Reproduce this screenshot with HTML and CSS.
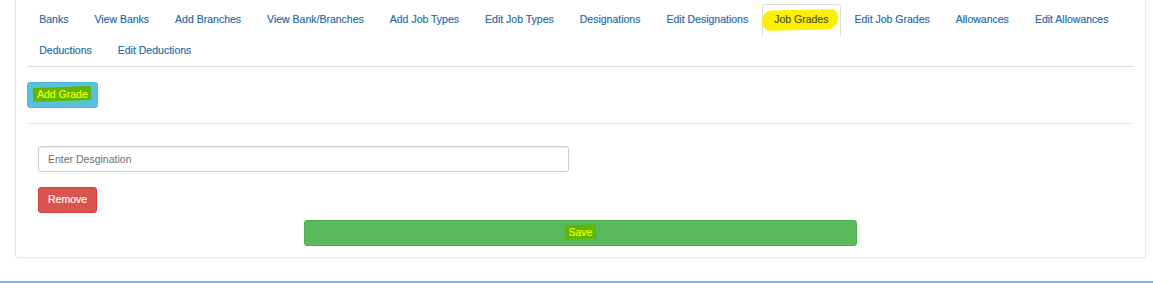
FILE: index.html
```html
<!DOCTYPE html>
<html lang="en">
<head>
    <meta charset="UTF-8">
    <title>Job Grades</title>
    <link rel="stylesheet" href="styles.css">
</head>
<body>
    <div class="page">
        <div class="panel">
            <ul class="nav-tabs">
                <li><a href="#">Banks</a></li>
                <li><a href="#">View Banks</a></li>
                <li><a href="#">Add Branches</a></li>
                <li><a href="#">View Bank/Branches</a></li>
                <li><a href="#">Add Job Types</a></li>
                <li><a href="#">Edit Job Types</a></li>
                <li><a href="#">Designations</a></li>
                <li><a href="#">Edit Designations</a></li>
                <li class="active"><a href="#"><span class="mark-yellow">Job Grades</span></a></li>
                <li><a href="#">Edit Job Grades</a></li>
                <li><a href="#">Allowances</a></li>
                <li><a href="#">Edit Allowances</a></li>
                <li><a href="#">Deductions</a></li>
                <li><a href="#">Edit Deductions</a></li>
            </ul>

            <div class="toolbar">
                <button class="btn btn-info"><span class="mark-green">Add Grade</span></button>
            </div>
            <hr>

            <div class="grade-form">
                <input type="text" class="form-control" placeholder="Enter Desgination">
                <button class="btn btn-danger remove-btn">Remove</button>
            </div>
            <button class="btn btn-success save-btn"><span class="mark-green">Save</span></button>
        </div>
    </div>
    <div class="footer-line"></div>
</body>
</html>
```

FILE: styles.css
```css
* {
    box-sizing: border-box;
}
body {
    margin: 0;
    font-family: 'Liberation Sans', Arial, sans-serif;
    font-size: 10.5px;
    line-height: 15px;
    color: #333;
    background: #fff;
    overflow: hidden;
}
.page {
    padding-left: 15px;
}
.panel {
    width: 1131px;
    margin-top: -8px;
    padding: 11px;
    border: 1px solid #f2e8d2;
    border-radius: 3px;
    box-shadow: 0 1px 1px rgba(0, 0, 0, .04);
    background: #fff;
}
.nav-tabs {
    list-style: none;
    margin: 0;
    padding: 0;
    display: flex;
    flex-wrap: wrap;
    border-bottom: 1px solid #ddd;
}
.nav-tabs li {
    margin-bottom: -1px;
}
.nav-tabs a {
    display: block;
    position: relative;
    padding: 7px 11.25px 8px;
    margin-right: 1.5px;
    line-height: 15px;
    border: 1px solid transparent;
    border-radius: 3px 3px 0 0;
    color: #2167a8;
    text-decoration: none;
    -webkit-text-stroke: 0.15px currentColor;
}
.nav-tabs .active a {
    color: #4a4a1a;
    background: #fff;
    border-color: #ddd #ddd transparent;
}
.mark-yellow {
    position: relative;
    z-index: 1;
}
.mark-yellow::before {
    content: '';
    position: absolute;
    z-index: -1;
    left: -12px;
    right: -10px;
    top: -3px;
    bottom: -5px;
    background: #fbf000;
    border-radius: 10px 6px 12px 8px / 10px 8px 10px 8px;
    transform: rotate(-1.2deg);
}
.mark-green {
    position: relative;
    z-index: 1;
    color: #f4ff00;
}
.mark-green::before {
    content: '';
    position: absolute;
    z-index: -1;
    left: -4px;
    right: -3px;
    top: -1px;
    bottom: -1px;
    background: #5fb800;
    transform: rotate(-2deg);
}
.toolbar {
    margin-top: 15px;
}
.btn {
    display: inline-block;
    padding: 4px 9px 5px;
    font-family: inherit;
    font-size: 10.5px;
    line-height: 15px;
    border: 1px solid transparent;
    border-radius: 3px;
    color: #fff;
    cursor: pointer;
    -webkit-text-stroke: 0.15px currentColor;
}
.btn-info {
    background: #5bc0de;
    border-color: #46b8da;
}
.btn-danger {
    background: #d9534f;
    border-color: #d43f3a;
}
.btn-success {
    background: #5cb85c;
    border-color: #4cae4c;
}
hr {
    margin: 15px 0 0;
    border: 0;
    border-top: 1px solid #e6e6e6;
}
.grade-form {
    padding: 22px 0 0 11px;
}
.form-control {
    display: block;
    width: 531px;
    height: 26px;
    padding: 4.5px 9px;
    font-family: inherit;
    font-size: 10.5px;
    color: #555;
    border: 1px solid #ccc;
    border-radius: 3px;
    box-shadow: inset 0 1px 1px rgba(0, 0, 0, .075);
    outline: none;
}
.form-control::placeholder {
    color: #6f6f6f;
}
.remove-btn {
    margin-top: 15px;
}
.save-btn {
    display: block;
    width: 553px;
    margin: 7px 0 0 277px;
    text-align: center;
}
.footer-line {
    margin-top: 23px;
    height: 2px;
    background: #74c0e8;
}
```
